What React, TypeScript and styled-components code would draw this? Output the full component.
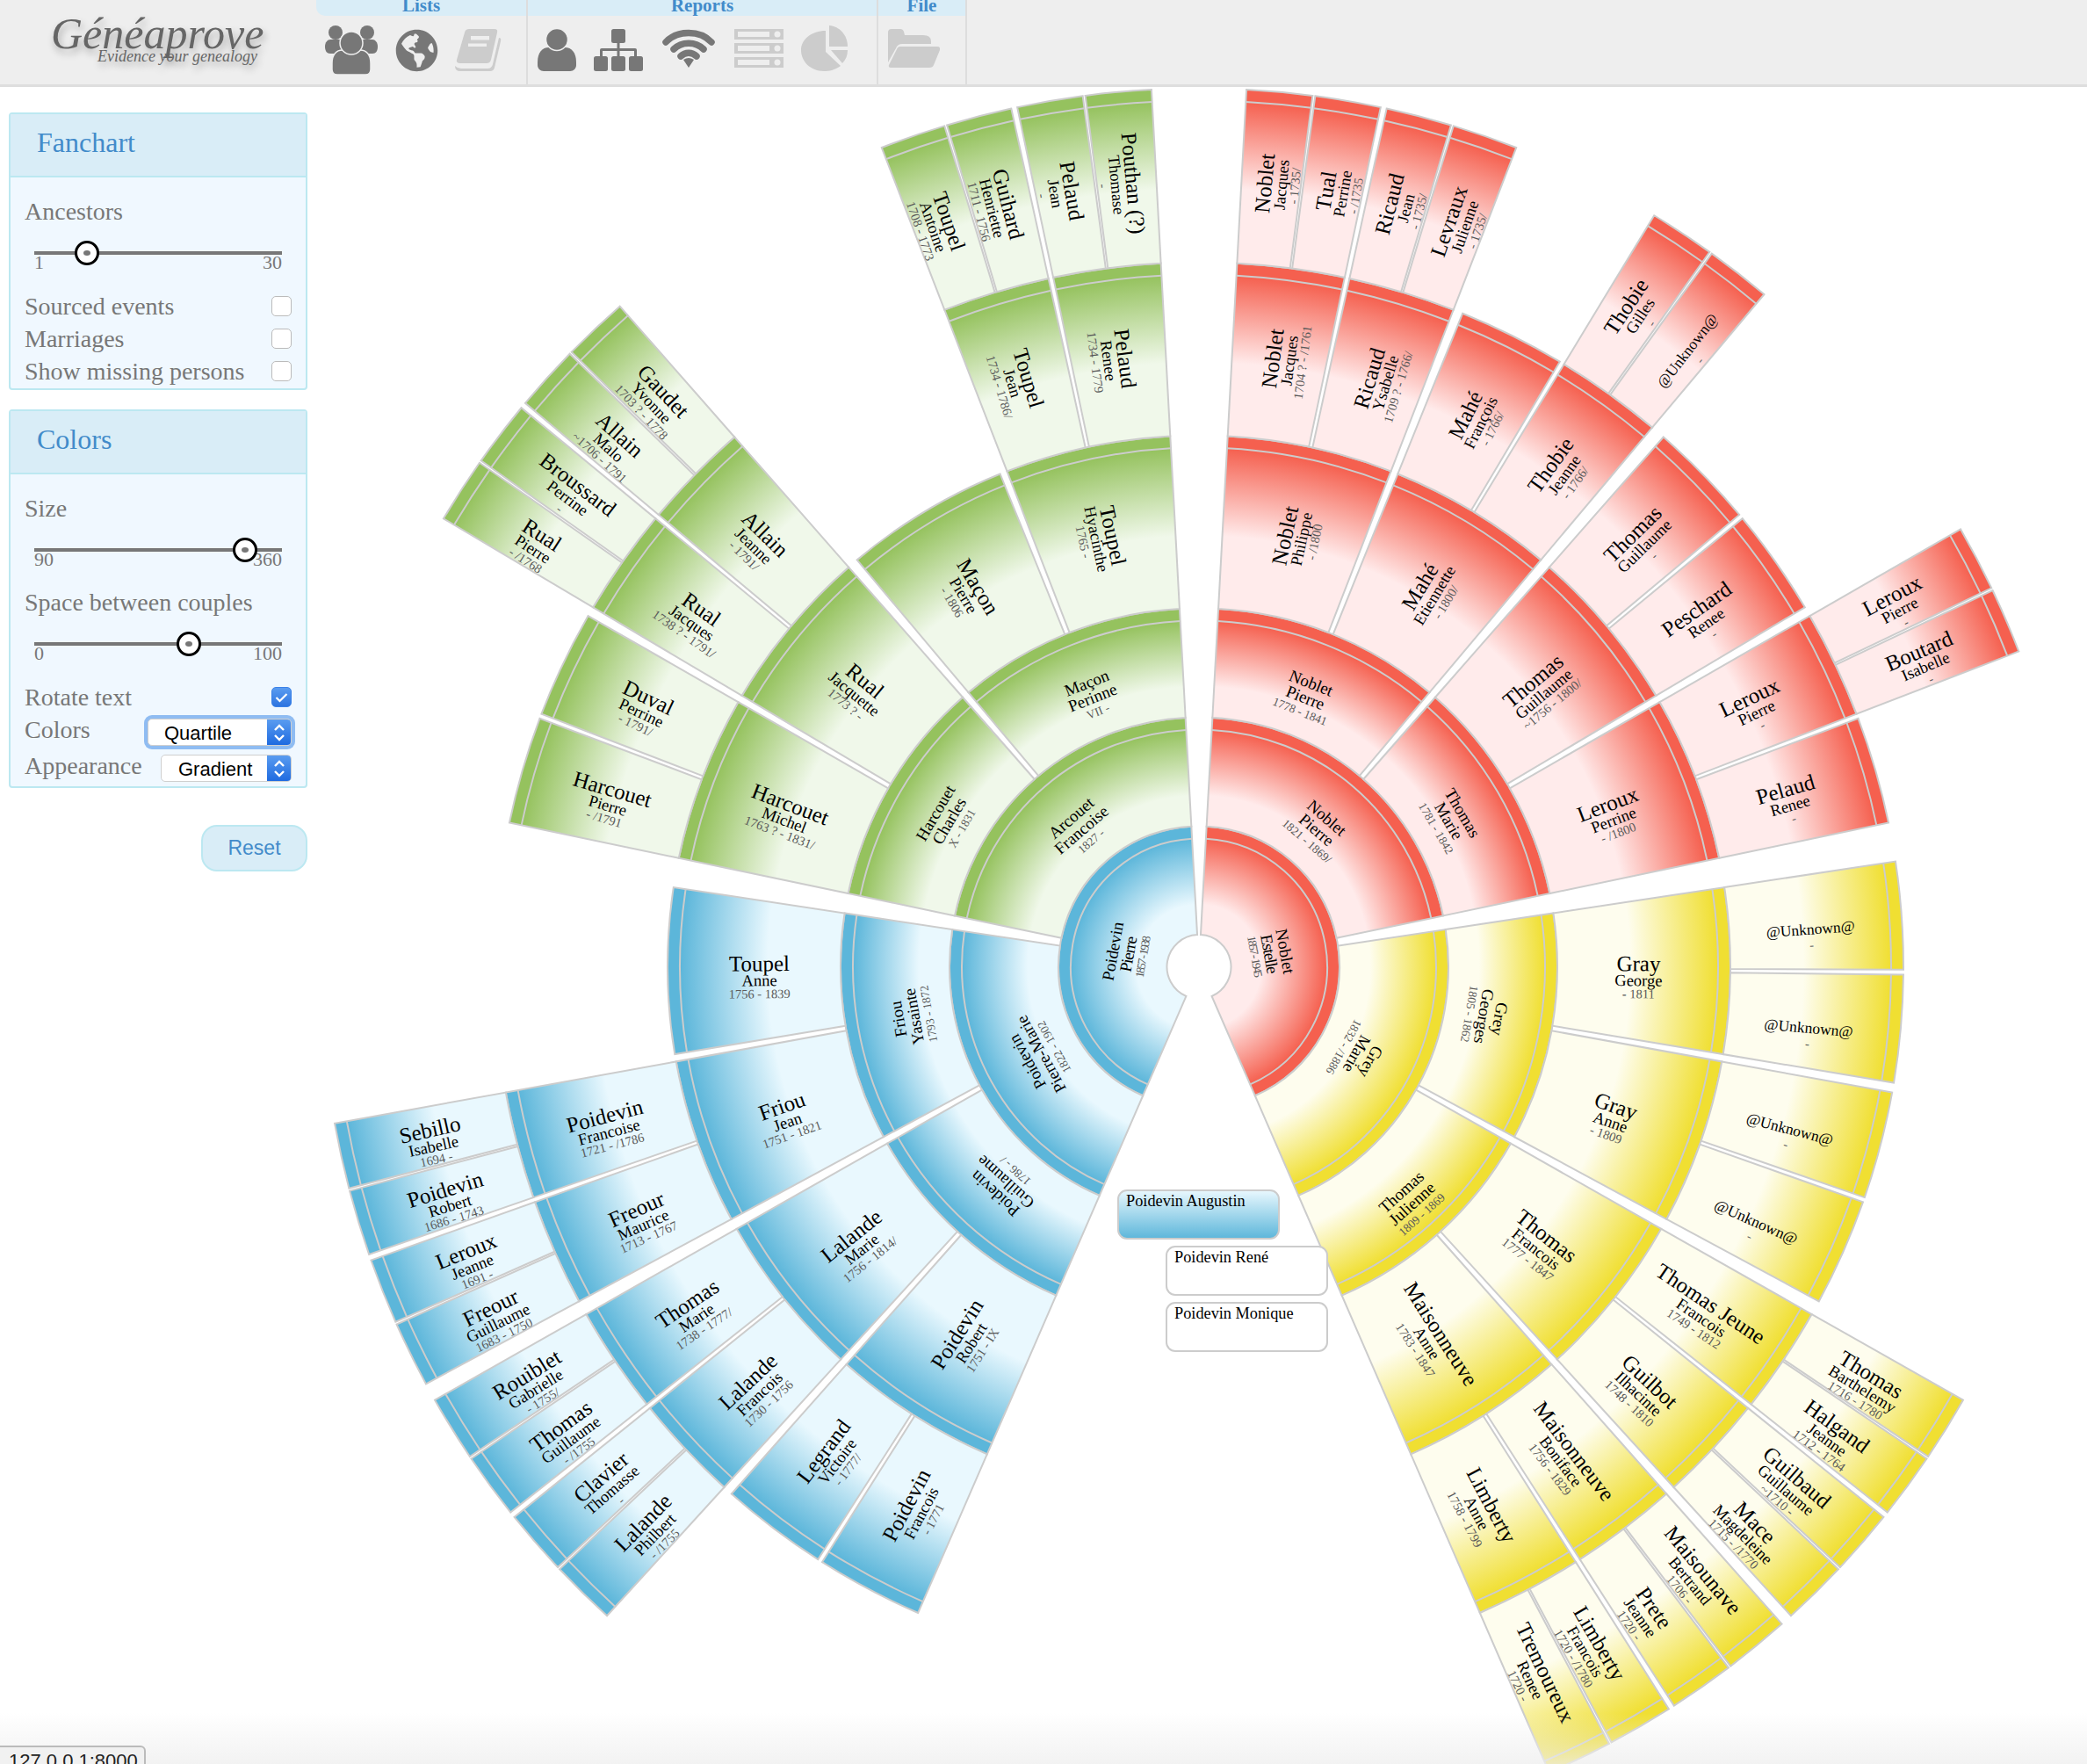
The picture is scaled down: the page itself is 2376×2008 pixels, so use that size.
import React from "react";
import styled, { createGlobalStyle } from "styled-components";
import { FaGlobeAmericas } from "react-icons/fa";

const GlobalStyle = createGlobalStyle`
  html, body {
    margin: 0;
    padding: 0;
    background: #fff;
    overflow: hidden;
    font-family: "Liberation Serif", "Times New Roman", serif;
  }
`;

const Page = styled.div`
  width: 2376px;
  height: 2008px;
  overflow: hidden;
  position: relative;
`;

/* ---------- top bar ---------- */

const TopBar = styled.header`
  display: flex;
  height: 99px;
  box-sizing: border-box;
  background: #eeeeee;
  border-bottom: 3px solid #dedede;
`;

const Logo = styled.div`
  width: 360px;
  box-sizing: border-box;
  padding: 13px 0 0 58px;
  font-style: italic;
  color: #666;
  text-shadow: 2px 5px 8px rgba(0, 0, 0, 0.3);
`;

const LogoName = styled.div`
  font-size: 50px;
  line-height: 50px;
`;

const LogoTag = styled.div`
  font-size: 18px;
  line-height: 18px;
  margin: -8px 0 0 53px;
`;

const ToolGroup = styled.div<{ $w: number; $first?: boolean }>`
  width: ${(p) => p.$w}px;
  box-sizing: border-box;
  border-right: 2px solid #dddddd;
`;

const ToolTitle = styled.div<{ $first?: boolean }>`
  height: 18px;
  overflow: hidden;
  background: #d9edf7;
  color: #428bca;
  font-weight: bold;
  font-size: 21px;
  line-height: 12px;
  text-align: center;
  border-bottom-left-radius: ${(p) => (p.$first ? "10px" : "0")};
`;

const ToolIcons = styled.div`
  display: flex;
  align-items: flex-start;
  padding-top: 11px;
  color: #777;
`;

const IconSlot = styled.div<{ $w: number; $x: number; $y?: number; $off?: boolean }>`
  width: ${(p) => p.$w}px;
  margin-left: ${(p) => p.$x}px;
  margin-top: ${(p) => p.$y ?? 4}px;
  color: ${(p) => (p.$off ? "#cccccc" : "#777777")};
  line-height: 0;
`;

const GroupIcon = () => (
  <svg width="60" height="57" viewBox="0 0 60 57">
    <circle cx="12" cy="8" r="8" fill="currentColor" />
    <circle cx="48" cy="8" r="8" fill="currentColor" />
    <path d="M0 24 C0 19 3 16 6 16 H20 V32 H6 C2 32 0 29 0 24 Z" fill="currentColor" />
    <path d="M60 24 C60 19 57 16 54 16 H40 V32 H54 C58 32 60 29 60 24 Z" fill="currentColor" />
    <path d="M8 43 C8 33 13 28 20 28 H40 C47 28 52 33 52 43 V50 C52 54 49 56 46 56 H14 C11 56 8 54 8 50 Z" fill="currentColor" stroke="#eee" strokeWidth="1.5" />
    <circle cx="30" cy="20" r="13" fill="currentColor" stroke="#eee" strokeWidth="1.5" />
  </svg>
);

const BookIcon = () => (
  <svg width="53" height="48" viewBox="0 0 53 48">
    <path d="M16 0 H45 Q49 0 48 4 L41 35 Q40 39 36 39 H6 Q1 39 2 35 L11 4 Q12 0 16 0 Z" fill="currentColor" />
    <path d="M50 10 Q53 10 52 14 L45 44 Q44 48 40 48 H6 Q0 48 0 42 Q3 45 7 45 H37 Q42 45 43 40 Z" fill="currentColor" />
    <rect x="18" y="8" width="21" height="4.5" fill="#eee" />
    <rect x="15" y="16.5" width="21" height="3.5" fill="#eee" />
  </svg>
);

const UserIcon = () => (
  <svg width="44" height="48" viewBox="0 0 44 48">
    <path d="M0 38 C0 27 5 21 13 21 H31 C39 21 44 27 44 38 V41 C44 45 41 48 37 48 H7 C3 48 0 45 0 41 Z" fill="currentColor" />
    <circle cx="22" cy="12" r="12.5" fill="currentColor" stroke="#eee" strokeWidth="1.5" />
  </svg>
);

const SitemapIcon = () => (
  <svg width="56" height="48" viewBox="0 0 56 48">
    <rect x="20" y="0" width="16" height="16" rx="2.5" fill="currentColor" />
    <rect x="26.5" y="15" width="3" height="17" fill="currentColor" />
    <path d="M7 32 V24 Q7 22 9 22 H47 Q49 22 49 24 V32 H46 V25 H10 V32 Z" fill="currentColor" />
    <rect x="0" y="31" width="16" height="17" rx="2.5" fill="currentColor" />
    <rect x="20" y="31" width="16" height="17" rx="2.5" fill="currentColor" />
    <rect x="40" y="31" width="16" height="17" rx="2.5" fill="currentColor" />
  </svg>
);

const SignalIcon = () => (
  <svg width="60" height="44" viewBox="0 0 60 44" fill="none" stroke="currentColor" strokeWidth="7.5" strokeLinecap="round">
    <path d="M4 15 C17 1 43 1 56 15" />
    <path d="M13 23 C22 14 38 14 47 23" />
    <path d="M21 31 C26 26 34 26 39 31" />
    <path d="M24 35 L30 44 L36 35 Q30 31 24 35 Z" fill="currentColor" stroke="none" />
  </svg>
);

const ServerIcon = () => (
  <svg width="56" height="44" viewBox="0 0 56 44">
    {[0, 16, 32].map((y) => (
      <g key={y}>
        <rect x="0" y={y} width="56" height="12" fill="currentColor" />
        <rect x="4" y={y + 3} width="36" height="6" fill="#eee" />
        <circle cx="49" cy={y + 6} r="3.5" fill="#eee" />
      </g>
    ))}
  </svg>
);

const PieIcon = () => (
  <svg width="54" height="52" viewBox="0 0 54 52">
    <path d="M28 6 V30 L45 46 C38 51 32 52 26 52 C11 52 0 41 0 28 C0 16 12 6 28 6 Z" fill="currentColor" />
    <path d="M32 0 C44 1 53 11 53 24 H32 Z" fill="currentColor" />
    <path d="M34 28 H53 C53 34 51 39 47 43 Z" fill="currentColor" />
  </svg>
);

const FolderIcon = () => (
  <svg width="59" height="44" viewBox="0 0 59 44">
    <path d="M0 38 V4 Q0 0 4 0 H14 Q17 0 18 3 L19 7 H40 Q49 7 49 14 V17 H16 Q11 17 9 22 Z" fill="currentColor" />
    <path d="M14 20 H56 Q60 20 59 24 L52 41 Q51 44 47 44 H3 Q0 44 1 41 L10 23 Q11 20 14 20 Z" fill="currentColor" />
  </svg>
);

/* ---------- side panels ---------- */

const Main = styled.div`
  display: flex;
  height: 1909px;
`;

const Side = styled.aside`
  width: 350px;
  flex: none;
  box-sizing: border-box;
  padding: 29px 0 0 10px;
  display: flex;
  flex-direction: column;
`;

const Panel = styled.section`
  border: 2px solid #bce8f1;
  border-radius: 4px;
  background: #f0f8ff;
  margin-bottom: 22px;
`;

const PanelHead = styled.h3`
  margin: 0;
  height: 72px;
  box-sizing: border-box;
  padding-left: 30px;
  background: #d9edf7;
  border-bottom: 2px solid #bce8f1;
  color: #428bca;
  font-weight: normal;
  font-size: 32px;
  line-height: 64px;
`;

const PanelBody = styled.div`
  padding: 21px 16px 1px;
`;

const Label = styled.div`
  font-size: 28px;
  line-height: 36px;
  color: #777;
`;

const SliderBox = styled.div`
  height: 71px;
  margin: 0 11px;
  position: relative;
`;

const Track = styled.div`
  position: absolute;
  top: 27px;
  left: 0;
  right: 0;
  height: 4px;
  background: #777;
`;

const Ticks = styled.div`
  padding-top: 29px;
  display: flex;
  justify-content: space-between;
  font-size: 22px;
  line-height: 22px;
  color: #777;
`;

const Thumb = styled.div<{ $at: number }>`
  position: absolute;
  left: ${(p) => p.$at - 14}px;
  top: 15px;
  width: 28px;
  height: 28px;
  box-sizing: border-box;
  border: 3px solid #000;
  border-radius: 50%;
  background: #fff;
  &::after {
    content: "";
    position: absolute;
    left: 7px;
    top: 8px;
    width: 8px;
    height: 6px;
    border-radius: 50%;
    background: #777;
  }
`;

const Row = styled.div<{ $h?: number }>`
  display: flex;
  align-items: center;
  justify-content: space-between;
  height: ${(p) => p.$h ?? 37}px;
  font-size: 28px;
  color: #777;
`;

const Check = styled.span<{ $on?: boolean }>`
  width: 23px;
  height: 23px;
  box-sizing: border-box;
  border-radius: 5px;
  border: 1px solid ${(p) => (p.$on ? "#3b82e8" : "#bbbbbb")};
  background: ${(p) => (p.$on ? "linear-gradient(#5a9cf0, #2d74e0)" : "#fff")};
  display: flex;
  align-items: center;
  justify-content: center;
`;

const Select = styled.div<{ $w: number; $pad: number; $focus?: boolean }>`
  width: ${(p) => p.$w}px;
  height: 31px;
  margin-top: 5px;
  box-sizing: border-box;
  display: flex;
  justify-content: space-between;
  background: #fff;
  border: 1px solid #cfcfcf;
  border-radius: 5px;
  padding-left: ${(p) => p.$pad}px;
  color: #000;
  font-family: "Liberation Sans", Arial, sans-serif;
  font-size: 22px;
  line-height: 31px;
  overflow: hidden;
  box-shadow: ${(p) => (p.$focus ? "0 0 0 4px #8fbcf2" : "none")};
`;

const SelectArrows = styled.span`
  width: 27px;
  height: 100%;
  background: linear-gradient(#5a9cf0, #1f6be0);
  display: flex;
  align-items: center;
  justify-content: center;
`;

const ResetButton = styled.button`
  align-self: flex-end;
  width: 121px;
  height: 53px;
  margin-top: 20px;
  border: 2px solid #bce8f1;
  border-radius: 18px;
  background: #d9edf7;
  color: #428bca;
  font-family: "Liberation Sans", Arial, sans-serif;
  font-size: 23px;
`;

const Arrows = () => (
  <svg width="14" height="22" viewBox="0 0 14 22" fill="none" stroke="#fff" strokeWidth="2.4">
    <path d="M2 8 L7 3 L12 8" />
    <path d="M2 14 L7 19 L12 14" />
  </svg>
);

/* ---------- fan chart ---------- */

const ChartSvg = styled.svg`
  flex: none;
  display: block;
  font-family: "Liberation Serif", "Times New Roman", serif;
`;

const SectorShape = styled.path`
  stroke: #cccccc;
  stroke-width: 2;
`;

const BandLine = styled.path`
  fill: none;
  stroke: #cccccc;
  stroke-width: 2;
`;

const Line = styled.text<{ $size: number; $grey?: boolean }>`
  font-size: ${(p) => p.$size}px;
  fill: ${(p) => (p.$grey ? "#5a5a5a" : "#000000")};
  text-anchor: middle;
`;

const SiblingBox = styled.rect`
  stroke: #cccccc;
  stroke-width: 2;
`;

const SiblingName = styled.text`
  font-size: 18.3px;
  fill: #000;
`;

interface Person {
  s: string;
  g: string;
  d: string;
  parents?: Person[];
  flip?: boolean;
  fit?: [number, number];
}

const p = (s: string, g: string, d: string, parents?: Person[], extra?: Partial<Person>): Person => ({
  s,
  g,
  d,
  parents,
  ...extra,
});

const tree: Person[] = [
  p("Poidevin", "Pierre", "1857 - 1938", [
    p("Poidevin", "Pierre-Marie", "1822 - 1902", [
      p("Poidevin", "Guillaume", "1786 - /", [
        p("Poidevin", "Robert", "1751 - IX", [
          p("Poidevin", "Francois", "- 1771"),
          p("Legrand", "Victoire", "- 1777/"),
        ]),
        p("Lalande", "Marie", "1756 - 1814/", [
          p("Lalande", "Francois", "1730 - 1756", [
            p("Lalande", "Philbert", "- /1755"),
            p("Clavier", "Thomasse", "-"),
          ]),
          p("Thomas", "Marie", "1738 - 1777/", [
            p("Thomas", "Guillaume", "- /1755"),
            p("Rouiblet", "Gabrielle", "- 1755/"),
          ]),
        ]),
      ]),
      p("Friou", "Yasainte", "1793 - 1872", [
        p("Friou", "Jean", "1751 - 1821", [
          p("Freour", "Maurice", "1713 - 1767", [
            p("Freour", "Guillaume", "1683 - 1750"),
            p("Leroux", "Jeanne", "1691 -"),
          ]),
          p("Poidevin", "Francoise", "1721 - /1786", [
            p("Poidevin", "Robert", "1686 - 1743"),
            p("Sebillo", "Isabelle", "1694 -"),
          ]),
        ]),
        p("Toupel", "Anne", "1756 - 1839"),
      ]),
    ]),
    p("Arcouet", "Francoise", "1827 -", [
      p("Harcouet", "Charles", "X - 1831", [
        p("Harcouet", "Michel", "1763 ? - 1831/", [
          p("Harcouet", "Pierre", "- /1791"),
          p("Duval", "Perrine", "- 1791/"),
        ]),
        p("Rual", "Jacquette", "1773 ? -", [
          p("Rual", "Jacques", "1738 ? - 1791/", [
            p("Rual", "Pierre", "- /1768"),
            p("Broussard", "Perrine", "-"),
          ]),
          p("Allain", "Jeanne", "- 1791/", [
            p("Allain", "Malo", "~1706 - 1791"),
            p("Gaudet", "Yvonne", "1703 ? - 1778"),
          ]),
        ]),
      ]),
      p("Maçon", "Perinne", "VII -", [
        p("Maçon", "Pierre", "- 1806"),
        p("Toupel", "Hyacinthe", "1765 -", [
          p("Toupel", "Jean", "1734 - 1786/", [
            p("Toupel", "Antoine", "1708 - 1773"),
            p("Guihard", "Henriette", "1711 - 1756"),
          ]),
          p("Pelaud", "Renee", "1734 - 1779", [
            p("Pelaud", "Jean", "-"),
            p("Pouthan (?)", "Thomase", "-"),
          ]),
        ]),
      ]),
    ]),
  ], { fit: [41, 48] }),
  p("Noblet", "Estelle", "1857 - 1945", [
    p("Noblet", "Pierre", "1821 - 1869/", [
      p("Noblet", "Pierre", "1778 - 1841", [
        p("Noblet", "Philippe", "- /1800", [
          p("Noblet", "Jacques", "1704 ? - /1761", [
            p("Noblet", "Jacques", "- 1735/"),
            p("Tual", "Perrine", "- /1735"),
          ]),
          p("Ricaud", "Ysabelle", "1709 ? - 1766/", [
            p("Ricaud", "Jean", "- 1735/"),
            p("Levraux", "Julienne", "- 1735/"),
          ]),
        ]),
        p("Mahé", "Etiennette", "- 1800/", [
          p("Mahé", "François", "- 1766/"),
          p("Thobie", "Jeanne", "- 1766/", [
            p("Thobie", "Gilles", "-"),
            p("", "@Unknown@", "-"),
          ]),
        ]),
      ]),
      p("Thomas", "Marie", "1781 - 1842", [
        p("Thomas", "Guillaume", "~1756 - 1800/", [
          p("Thomas", "Guillaume", "-"),
          p("Peschard", "Renee", "-"),
        ]),
        p("Leroux", "Perrine", "- /1800", [
          p("Leroux", "Pierre", "-", [
            p("Leroux", "Pierre", "-"),
            p("Boutard", "Isabelle", "-"),
          ]),
          p("Pelaud", "Renee", "-"),
        ]),
      ]),
    ]),
    p("Grey", "Marie", "1832 - /1886", [
      p("Grey", "Georges", "1805 - 1862", [
        p("Gray", "George", "- 1811", [
          p("", "@Unknown@", "-"),
          p("", "@Unknown@", "-"),
        ]),
        p("Gray", "Anne", "- 1809", [
          p("", "@Unknown@", "-"),
          p("", "@Unknown@", "-"),
        ]),
      ]),
      p("Thomas", "Julienne", "1809 - 1869", [
        p("Thomas", "Francois", "1777 - 1847", [
          p("Thomas Jeune", "Francois", "1749 - 1812", [
            p("Thomas", "Barthelemy", "1716 - 1780"),
            p("Halgand", "Jeanne", "1712 - 1764"),
          ]),
          p("Guilbot", "Ilhacinte", "1748 - 1810", [
            p("Guilbaud", "Guillaume", "~1710 -"),
            p("Mace", "Magdeleine", "1715 - /1770"),
          ]),
        ]),
        p("Maisonneuve", "Anne", "1783 - 1847", [
          p("Maisonneuve", "Boniface", "1756 - 1829", [
            p("Maisounave", "Bertrand", "1706 -"),
            p("Prete", "Jeanne", "1720 -"),
          ]),
          p("Limberty", "Anne", "1758 - 1799", [
            p("Limberty", "Francois", "1720 - /1780"),
            p("Tremoureux", "Renee", "1720 -"),
          ]),
        ]),
      ], { flip: true }),
    ]),
  ], { fit: [45, 48] }),
];

const CX = 1015;
const CY = 1001.5;
const RADII = [36.5, 160, 284, 408, 605, 802, 1000];
const GAPS = [6.2, 3.2, 1.2, 0.8, 0.4, 0.17];
const BAND = 14;

const PALETTE: Record<string, [string, string]> = {
  blue: ["#5cb6da", "#e9f8fe"],
  green: ["#95c25e", "#f0f8ea"],
  red: ["#f5604f", "#ffebeb"],
  yellow: ["#f0df32", "#fefdee"],
};

const polar = (r: number, a: number) => {
  const t = (a * Math.PI) / 180;
  return [CX + r * Math.sin(t), CY - r * Math.cos(t)];
};

interface Placed {
  person: Person;
  ring: number;
  a0: number;
  a1: number;
  color: string;
}

const placed: Placed[] = [];

const place = (list: Person[], a0: number, a1: number, ring: number, color: string) => {
  const mid = (a0 + a1) / 2;
  const gap = GAPS[ring - 1] / 2;
  list.forEach((person, i) => {
    const from = i === 0 ? a0 : mid + gap;
    const to = i === 0 ? mid - gap : a1;
    let col = color;
    if (ring === 1) col = i === 0 ? "blue" : "red";
    if (ring === 2) {
      if (color === "blue") col = i === 0 ? "blue" : "green";
      else col = i === 0 ? "red" : "yellow";
    }
    placed.push({ person, ring, a0: from, a1: to, color: col });
    if (person.parents) place(person.parents, from, to, ring + 1, col);
  });
};
place(tree, -156.5, 156.5, 1, "");

const arcPath = (r: number, a0: number, a1: number) => {
  const [x0, y0] = polar(r, a0);
  const [x1, y1] = polar(r, a1);
  return `M${x0} ${y0} A${r} ${r} 0 0 1 ${x1} ${y1}`;
};

const sectorPath = (r0: number, r1: number, a0: number, a1: number) => {
  const [ix0, iy0] = polar(r0, a0);
  const [ox0, oy0] = polar(r1, a0);
  const [ox1, oy1] = polar(r1, a1);
  const [ix1, iy1] = polar(r0, a1);
  return `M${ix0} ${iy0} L${ox0} ${oy0} A${r1} ${r1} 0 0 1 ${ox1} ${oy1} L${ix1} ${iy1} A${r0} ${r0} 0 0 0 ${ix0} ${iy0} Z`;
};

const Gradients = () => (
  <defs>
    {Object.keys(PALETTE).map((name) =>
      [1, 2, 3, 4, 5, 6].map((ring) => {
        const r1 = RADII[ring];
        const inner = r1 - BAND;
        const soft = ring <= 3 ? 75 : 100;
        return (
          <radialGradient key={name + ring} id={`${name}-${ring}`} gradientUnits="userSpaceOnUse" cx={CX} cy={CY} r={r1}>
            <stop offset={(inner - soft) / r1} stopColor={PALETTE[name][1]} />
            <stop offset={inner / r1} stopColor={PALETTE[name][0]} />
          </radialGradient>
        );
      })
    )}
    <linearGradient id="sibling-fill" x1="0" y1="0" x2="0" y2="1">
      <stop offset="0" stopColor="#e9f8fe" />
      <stop offset="1" stopColor="#5cb6da" />
    </linearGradient>
  </defs>
);

const SectorText = ({ item }: { item: Placed }) => {
  const { person, ring, a0, a1 } = item;
  const mid = (a0 + a1) / 2;
  const tangential = ring <= 3;
  const r = (RADII[ring - 1] + RADII[ring]) / 2 - (tangential ? 0 : 6);
  const [x, y] = polar(r, mid);
  let rot = tangential ? mid : mid > 0 ? mid - 90 : mid + 90;
  if (person.flip) rot -= 180;
  const nameSize = tangential ? 19 : 25;
  const givenSize = tangential ? 19 : 18.5;
  const dateSize = tangential ? 13.5 : 14.5;
  const ys = tangential ? [5, 23, 38] : [1, 18, 32];
  return (
    <g transform={`translate(${x} ${y}) rotate(${rot})`}>
      {person.s && (
        <Line y={ys[0]} $size={nameSize}>
          {person.s}
        </Line>
      )}
      <Line
        y={person.s ? ys[1] : 14}
        $size={person.s ? givenSize : 17.5}
        {...(person.fit ? { textLength: person.fit[0], lengthAdjust: "spacing" } : {})}
      >
        {person.g}
      </Line>
      <Line
        y={person.s ? ys[2] : 31}
        $size={dateSize}
        $grey
        {...(person.fit ? { textLength: person.fit[1], lengthAdjust: "spacing" } : {})}
      >
        {person.d}
      </Line>
    </g>
  );
};

const FanChart = () => (
  <ChartSvg width="2026" height="1909" viewBox="0 0 2026 1909">
    <Gradients />
    {placed.map((it, i) => (
      <g key={i}>
        <SectorShape d={sectorPath(RADII[it.ring - 1], RADII[it.ring], it.a0, it.a1)} fill={`url(#${it.color}-${it.ring})`} />
        <BandLine d={arcPath(RADII[it.ring] - BAND, it.a0, it.a1)} />
      </g>
    ))}
    {placed.map((it, i) => (
      <SectorText key={i} item={it} />
    ))}
    <SiblingBox x="923" y="1256" width="183" height="55" rx="10" fill="url(#sibling-fill)" />
    <SiblingName x="932" y="1274">Poidevin Augustin</SiblingName>
    <SiblingBox x="978" y="1320" width="183" height="55" rx="10" fill="#fff" />
    <SiblingName x="987" y="1338">Poidevin René</SiblingName>
    <SiblingBox x="978" y="1384" width="183" height="55" rx="10" fill="#fff" />
    <SiblingName x="987" y="1402">Poidevin Monique</SiblingName>
  </ChartSvg>
);

/* ---------- browser chrome at the bottom ---------- */

const BottomFade = styled.div`
  position: absolute;
  left: 0;
  right: 0;
  bottom: 0;
  height: 58px;
  background: linear-gradient(rgba(240, 240, 240, 0), rgba(238, 238, 238, 0.75));
  pointer-events: none;
`;

const StatusBubble = styled.div`
  position: absolute;
  left: -2px;
  top: 1987px;
  width: 168px;
  height: 30px;
  box-sizing: border-box;
  padding: 4px 0 0 10px;
  background: #f1f1f1;
  border: 2px solid #bbbbbb;
  border-radius: 0 6px 0 0;
  color: #222;
  font-family: "Liberation Sans", Arial, sans-serif;
  font-size: 22px;
  line-height: 24px;
`;

const App: React.FC = () => (
  <Page>
    <GlobalStyle />
    <TopBar>
      <Logo>
        <LogoName>Généaprove</LogoName>
        <LogoTag>Evidence your genealogy</LogoTag>
      </Logo>
      <ToolGroup $w={241}>
        <ToolTitle $first>Lists</ToolTitle>
        <ToolIcons>
          <IconSlot $w={60} $x={10} $y={0}><GroupIcon /></IconSlot>
          <IconSlot $w={49} $x={20}><FaGlobeAmericas size={49} /></IconSlot>
          <IconSlot $w={53} $x={19} $off><BookIcon /></IconSlot>
        </ToolIcons>
      </ToolGroup>
      <ToolGroup $w={399}>
        <ToolTitle>Reports</ToolTitle>
        <ToolIcons>
          <IconSlot $w={44} $x={11}><UserIcon /></IconSlot>
          <IconSlot $w={56} $x={20}><SitemapIcon /></IconSlot>
          <IconSlot $w={60} $x={22}><SignalIcon /></IconSlot>
          <IconSlot $w={56} $x={22} $off><ServerIcon /></IconSlot>
          <IconSlot $w={54} $x={20} $y={0} $off><PieIcon /></IconSlot>
        </ToolIcons>
      </ToolGroup>
      <ToolGroup $w={101}>
        <ToolTitle>File</ToolTitle>
        <ToolIcons>
          <IconSlot $w={59} $x={11} $off><FolderIcon /></IconSlot>
        </ToolIcons>
      </ToolGroup>
    </TopBar>
    <Main>
      <Side>
        <Panel>
          <PanelHead>Fanchart</PanelHead>
          <PanelBody>
            <Label>Ancestors</Label>
            <SliderBox>
              <Track />
              <Ticks><span>1</span><span>30</span></Ticks>
              <Thumb $at={60} />
            </SliderBox>
            <Row>Sourced events<Check /></Row>
            <Row>Marriages<Check /></Row>
            <Row>Show missing persons<Check /></Row>
          </PanelBody>
        </Panel>
        <Panel>
          <PanelHead>Colors</PanelHead>
          <PanelBody>
            <Label>Size</Label>
            <SliderBox>
              <Track />
              <Ticks><span>90</span><span>360</span></Ticks>
              <Thumb $at={240} />
            </SliderBox>
            <Label>Space between couples</Label>
            <SliderBox>
              <Track />
              <Ticks><span>0</span><span>100</span></Ticks>
              <Thumb $at={176} />
            </SliderBox>
            <Row>
              Rotate text
              <Check $on>
                <svg width="15" height="12" viewBox="0 0 15 12" fill="none" stroke="#fff" strokeWidth="2.2">
                  <path d="M1.5 6 L5.5 10 L13.5 2" />
                </svg>
              </Check>
            </Row>
            <Row $h={38}>
              Colors
              <Select $w={164} $pad={18} $focus>Quartile<SelectArrows><Arrows /></SelectArrows></Select>
            </Row>
            <Row $h={44}>
              Appearance
              <Select $w={149} $pad={19}>Gradient<SelectArrows><Arrows /></SelectArrows></Select>
            </Row>
          </PanelBody>
        </Panel>
        <ResetButton>Reset</ResetButton>
      </Side>
      <FanChart />
    </Main>
    <BottomFade />
    <StatusBubble>127.0.0.1:8000</StatusBubble>
  </Page>
);

export default App;
